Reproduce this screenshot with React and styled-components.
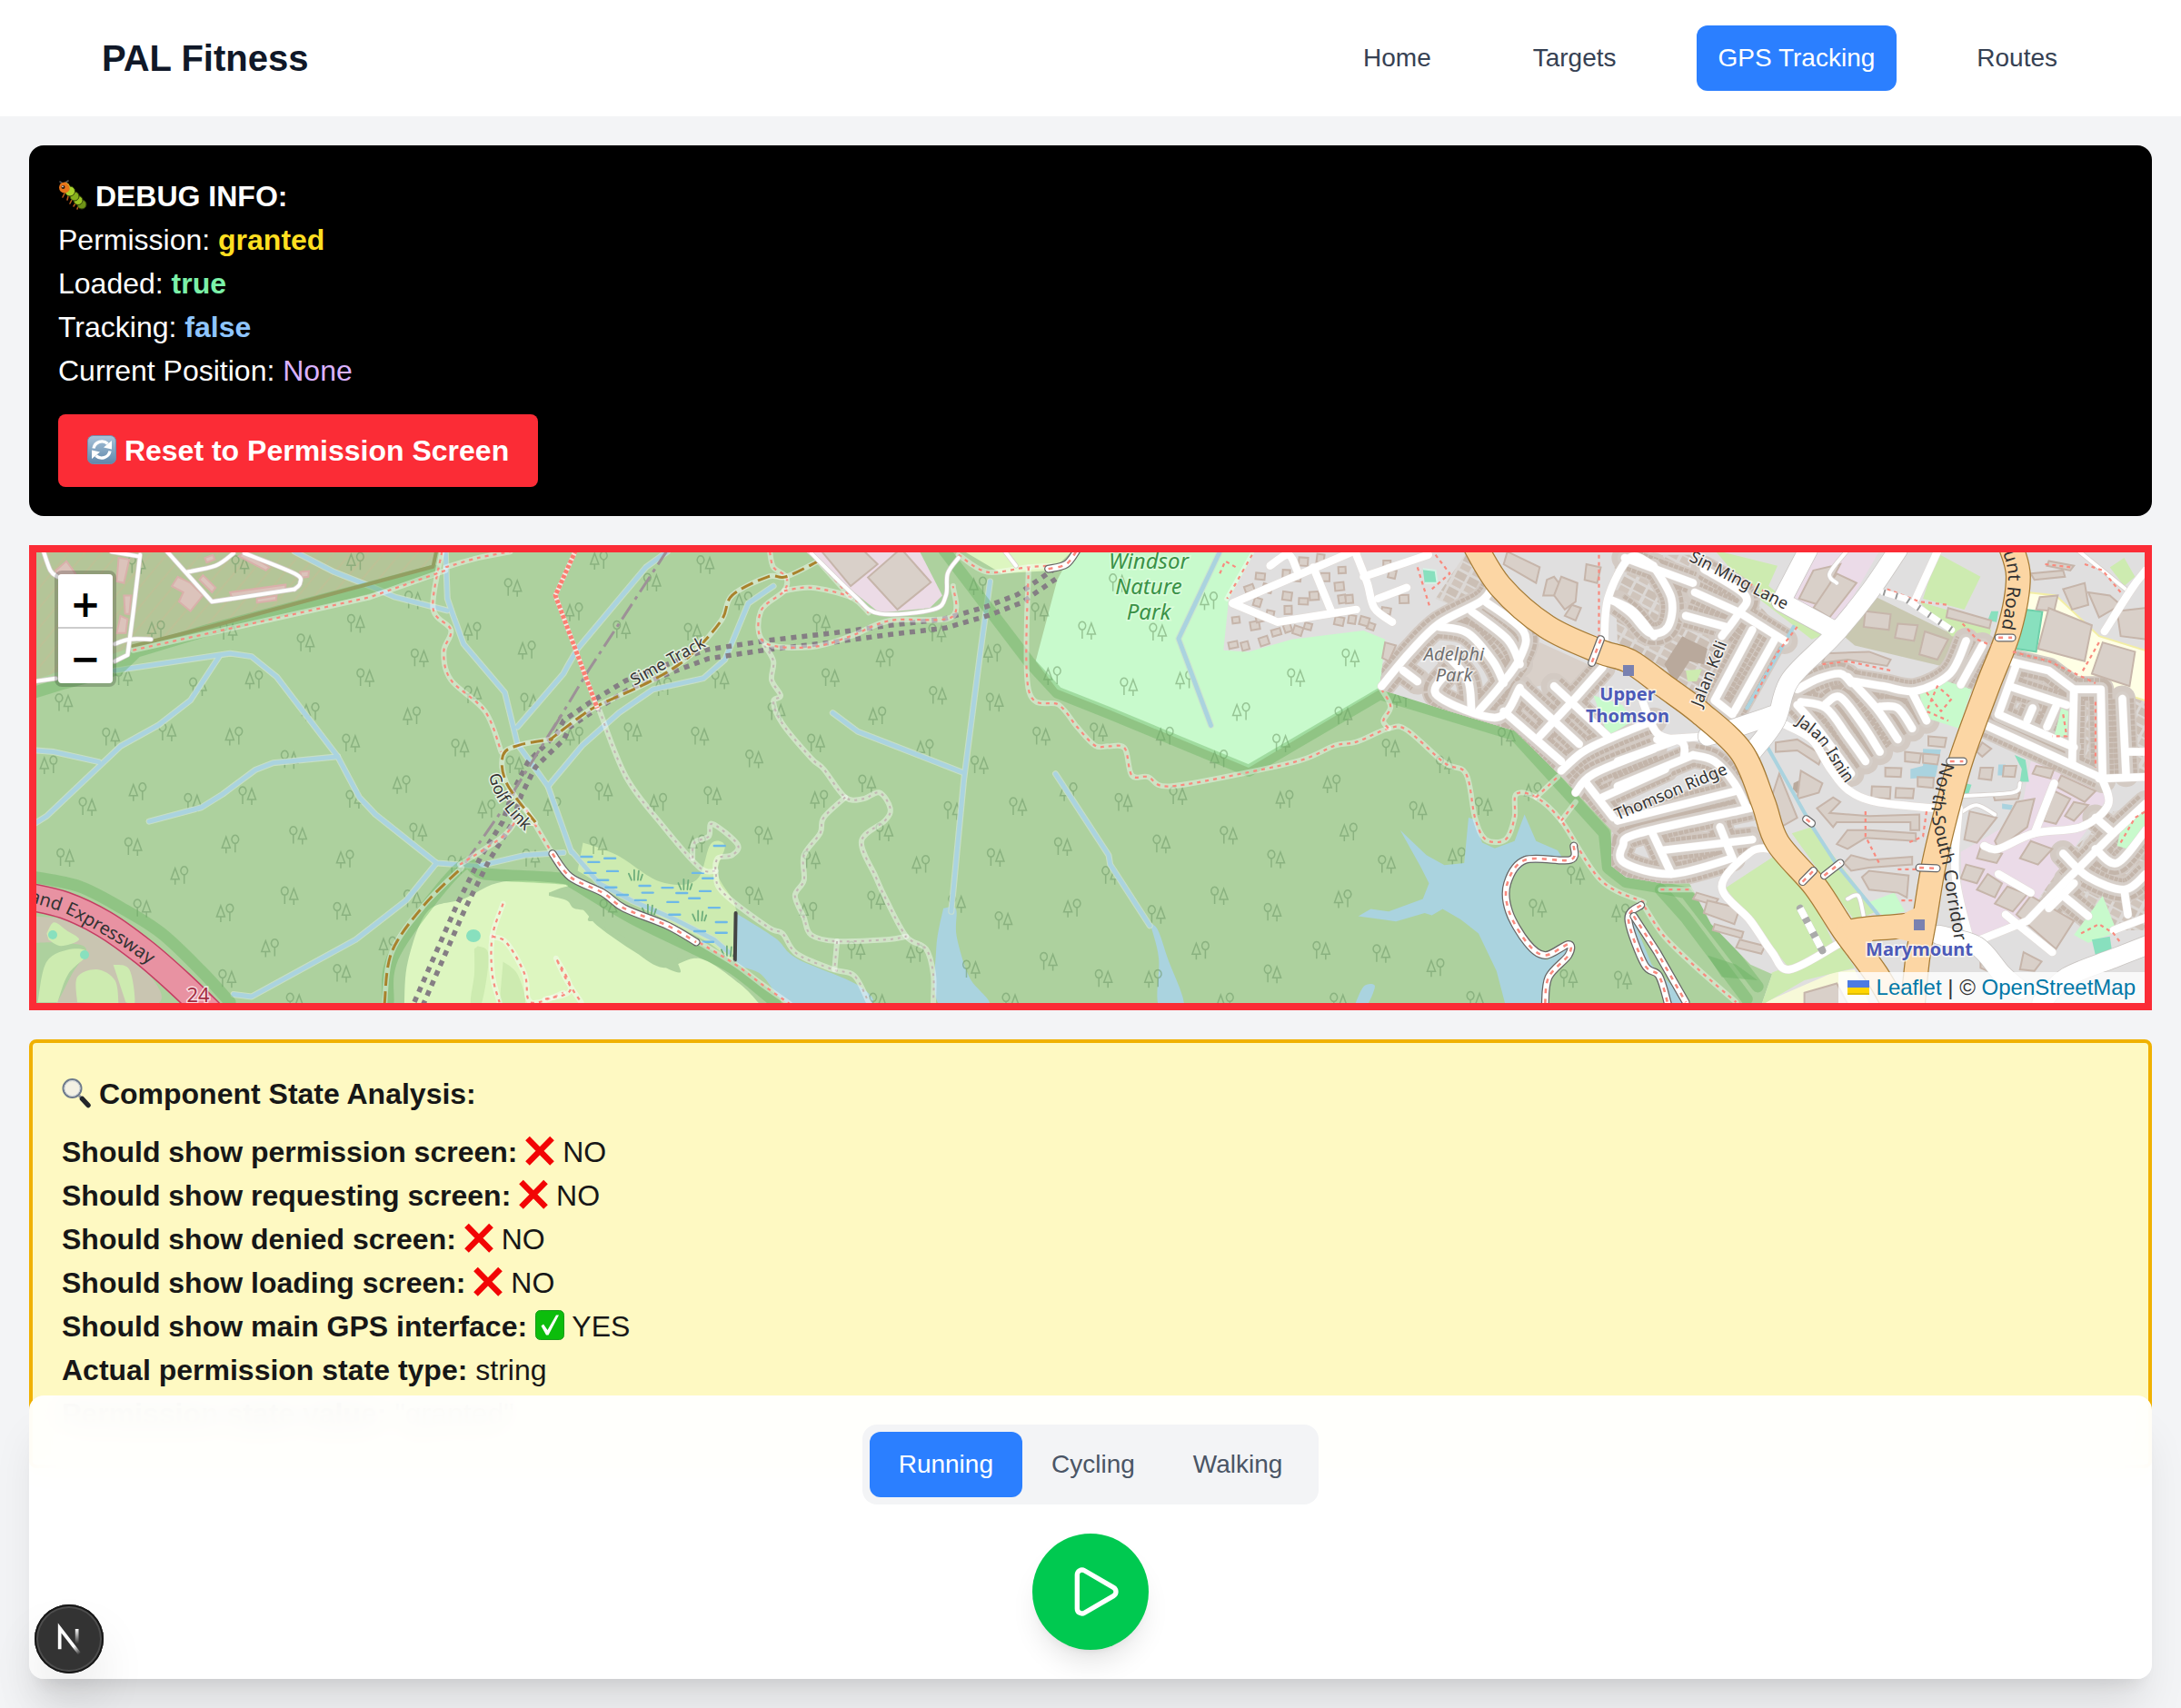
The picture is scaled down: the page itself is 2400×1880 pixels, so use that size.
import React from 'react';
import styled, { createGlobalStyle } from 'styled-components';
import { Play } from 'lucide-react';

const GlobalStyle = createGlobalStyle`
  *, *::before, *::after { box-sizing: border-box; }
  body {
    margin: 0;
    background: #f3f4f6;
    color: #171717;
    font-family: "Liberation Sans", Arial, Helvetica, sans-serif;
    font-size: 32px;
    line-height: 48px;
  }
  button { font: inherit; color: inherit; border: 0; margin: 0; cursor: pointer; }
  a { text-decoration: none; }
  h1, h2, p { margin: 0; font-size: inherit; }
`;

/* ---------- page chrome ---------- */

const Header = styled.header`
  display: flex;
  align-items: center;
  justify-content: space-between;
  height: 128px;
  padding: 0 112px;
  background: #fff;
`;

const Brand = styled.h1`
  font-size: 40px;
  line-height: 56px;
  font-weight: 700;
  color: #101828;
`;

const Nav = styled.nav`
  display: flex;
  gap: 64px;
`;

const NavLink = styled.a`
  padding: 16px 24px;
  border-radius: 12px;
  font-size: 28px;
  line-height: 40px;
  color: ${(p) => (p.$active ? '#fff' : '#364153')};
  background: ${(p) => (p.$active ? '#2b7fff' : 'transparent')};
`;

const Main = styled.main`
  display: flex;
  flex-direction: column;
  gap: 32px;
  padding: 32px;
`;

const DebugPanel = styled.section`
  padding: 32px;
  border-radius: 16px;
  background: #000;
  color: #fff;
`;

const Value = styled.span`
  color: ${(p) => p.$color};
  font-weight: ${(p) => (p.$bold ? 700 : 400)};
`;

const ResetButton = styled.button`
  display: block;
  margin-top: 24px;
  padding: 16px 32px;
  border-radius: 8px;
  background: #fb2c36;
  color: #fff;
  font-weight: 700;
`;

const Emoji = styled.svg`
  width: 32px;
  height: 34px;
  vertical-align: -5px;
`;

const StatePanel = styled.section`
  padding: 32px;
  border: 4px solid #f0b100;
  border-radius: 8px;
  background: #fef9c2;
`;

const StateTitle = styled.h2`
  margin-bottom: 16px;
  font-weight: 700;
`;

/* ---------- map ---------- */

const MapFrame = styled.section`
  position: relative;
  height: 512px;
  border: 8px solid #fb2c36;
  overflow: hidden;
  background: #add19e;
`;

const MapSvg = styled.svg`
  display: block;
  width: 100%;
  height: 100%;
`;

const ZoomControl = styled.div`
  position: absolute;
  top: 20px;
  left: 20px;
  display: flex;
  flex-direction: column;
  border: 4px solid rgba(0, 0, 0, 0.2);
  border-radius: 8px;
  background-clip: padding-box;
`;

const ZoomButton = styled.button`
  width: 60px;
  height: 60px;
  padding: 0;
  background: #fff;
  color: #000;
  font-family: "DejaVu Sans", sans-serif;
  font-weight: 700;
  font-size: 40px;
  line-height: 66px;
  overflow: hidden;
  &:first-child { border-bottom: 2px solid #ccc; border-radius: 4px 4px 0 0; }
  &:last-child { border-radius: 0 0 4px 4px; }
`;

const Attribution = styled.div`
  position: absolute;
  right: 0;
  bottom: 0;
  padding: 0 10px;
  font-size: 24px;
  line-height: 34px;
  color: #333;
  background: rgba(255, 255, 255, 0.8);
  a { color: #0078a8; }
`;

const Flag = styled.svg`
  width: 24px;
  height: 16px;
  margin-right: 8px;
`;

const Shape = styled.path`
  fill: ${(p) => p.$fill};
  stroke: ${(p) => p.$edge || 'none'};
  stroke-width: 2px;
`;

const Stroke = styled.path`
  fill: none;
  stroke: ${(p) => p.$color};
  stroke-width: ${(p) => p.$w}px;
  stroke-dasharray: ${(p) => p.$dash || 'none'};
  stroke-linejoin: round;
  stroke-linecap: ${(p) => (p.$dash ? 'butt' : 'round')};
`;

const MapLabel = styled.text`
  font-family: "Noto Sans", sans-serif;
  font-size: ${(p) => p.$size || 18}px;
  font-weight: ${(p) => (p.$bold ? 700 : 400)};
  font-style: ${(p) => (p.$italic ? 'italic' : 'normal')};
  fill: ${(p) => p.$color || '#333'};
  stroke: ${(p) => p.$halo || 'rgba(255,255,255,0.7)'};
  stroke-width: 3px;
  paint-order: stroke;
`;

/* The map is digitised on four sheets; each covers 620x540 units on a 1568 grid. */
const A = 0;
const B = 600;
const C = 1200;
const D = 1780;

const points = (...parts) => {
  const out = [];
  for (let i = 0; i < parts.length; i += 2) {
    const n = parts[i + 1].trim().split(/\s+/).map(Number);
    for (let k = 0; k < n.length; k += 2) {
      out.push([
        Math.round((parts[i] + n[k] * 0.3954) * 10) / 10,
        Math.round((590 + n[k + 1] * 0.3444) * 10) / 10,
      ]);
    }
  }
  return out;
};

const straight = (...parts) => 'M' + points(...parts).map((p) => p.join(' ')).join('L');

const smooth = (...parts) => {
  const p = points(...parts);
  let d = `M${p[0].join(' ')}`;
  for (let i = 0; i < p.length - 1; i += 1) {
    const a = p[i - 1] || p[i];
    const b = p[i];
    const c = p[i + 1];
    const e = p[i + 2] || c;
    d += `C${b[0] + (c[0] - a[0]) / 6} ${b[1] + (c[1] - a[1]) / 6} ${c[0] - (e[0] - b[0]) / 6} ${c[1] - (e[1] - b[1]) / 6} ${c[0]} ${c[1]}`;
  }
  return d;
};

/* Copy of a sheet line moved sideways, for double dotted railways. */
const shifted = (offset, ...parts) => {
  const p = points(...parts);
  return 'M' + p.map((q, i) => {
    const a = p[i - 1] || q;
    const b = p[i + 1] || q;
    const len = Math.hypot(b[0] - a[0], b[1] - a[1]) || 1;
    return `${q[0] - ((b[1] - a[1]) / len) * offset} ${q[1] + ((b[0] - a[0]) / len) * offset}`;
  }).join('L');
};

const KINDS = {
  stream: [['rgba(206,226,206,0.8)', 7], ['#aad3df', 4.8]],
  foot: [['rgba(255,255,255,0.4)', 6], ['#f98a7e', 2.2, '4 5']],
  path: [['#f98a7e', 2.2, '4 4']],
  trail: [['rgba(255,255,255,0.42)', 6], ['#c3b6b3', 2, '3 5']],
  track: [['rgba(255,255,255,0.42)', 6], ['#a9822c', 3, '14 6']],
  red: [['#f4e9e0', 5], ['#fa7f72', 5, '4 2']],
  board: [['#666', 9], ['#fff', 6.5], ['#f98a7e', 2.6, '5 6']],
  power: [['#9d9197', 3, '20 6 4 6']],
  edge: [['rgba(105,178,98,0.42)', 13]],
  road: [['#e2dcd8', 9.5], ['#fff', 8.5]],
  lane: [['#d5cfcc', 5.5], ['#fff', 4]],
  wide: [['#c9c5c2', 22], ['#fff', 20.5]],
  houses: [['#d3cac3', 29], ['#c3b5aa', 25, '5 1'], ['#d6cfc9', 16]],
  primary: [['#a67b35', 28], ['#fcd6a4', 25.5]],
  motorway: [['#c53d63', 31], ['#e892a2', 28]],
};

function Ways({ kind, list, layered }) {
  if (layered) {
    return KINDS[kind].map(([color, w, dash], i) =>
      list.map((d, k) => <Stroke key={`${i}-${k}`} d={d} $color={color} $w={w} $dash={dash} />),
    );
  }
  return list.map((d, k) => KINDS[kind].map(([color, w, dash], i) => (
    <Stroke key={`${k}-${i}`} d={d} $color={color} $w={w} $dash={dash} />
  )));
}

const TREES = [
  ...points(A, `668 92 990 82 1427 165 1150 205 435 300 635 305 990 280 1315 305 850 342 1167 390 1467 365 343 450
    550 482 708 460 1016 453 177 533 865 562 1315 508 1472 532 1147 575 465 627 308 643 652 640 976 662 1280 678
    136 732 805 715 1432 732 384 818 536 852 688 830 1118 795 986 842 243 865 1355 873 181 1028 370 993
    642 985 829 957 1163 947 961 1033 1270 1050 1477 1030 500 1085 805 1150 395 1190 627 1205 951 1200 1147 1160
    752 1317 951 1398 632 1415 1080 1310 380 92 820 1490`),
  ...points(B, `150 78 445 92 297 148 81 243 212 300 410 308 552 208 768 280 1090 310 946 390 486 460 793 453 328 482
    1092 510 643 562 925 575 243 627 430 640 82 640 753 662 581 713 1057 680 1208 732 162 818 315 852 465 830
    895 793 763 842 1133 878 607 957 1046 1050 943 947 740 1035 423 985 581 1150 920 1165 733 1200 1145 1175
    865 1325 1030 1335 1185 1385 1315 865 1245 375 1250 532 1380 640 1205 160 1376 243 1507 302 1412 447 1440 993
    1253 1028 1467 1190 1275 1230 1400 1360 1457 818 1295 1490 925 1490 20 865 147 990 175 1190`),
  ...points(C, `330 208 187 308 106 482 262 460 723 390 571 453 420 562 703 575 22 627 208 640 530 662 835 678 358 713
    985 732 1157 643 672 793 91 852 243 830 541 842 911 878 1093 865 1232 818 197 985 384 957 719 947 516 1033
    824 1050 1020 1025 55 1085 358 1150 703 1160 183 1210 506 1203 307 1325 642 1325 809 1335 961 1380 506 1400
    36 1415 175 1415 1350 1085 1244 1190 1476 1205 1330 1415 1481 1420 375 1490 690 1490 1070 1485 865 520 75 150`),
];

const STREAMS = [
  straight(A, '320 430 640 375 700 385 770 450 940 705 1000 835 1045 890 1215 1045 1330 1055 1460 1020 1568 1012'),
  straight(A, '610 385 530 525 440 605 335 672 130 895 95 920'),
  straight(A, '95 685 150 690 275 722'),
  straight(A, '940 705 760 725 710 748 620 825 560 868 415 912'),
  straight(A, '1215 1045 1130 1165 990 1290 700 1472 650 1465'),
  straight(A, '820 50 930 115 1040 165 1100 195 1245 238'),
  straight(A, '1240 50 1245 200 1260 250 1290 345 1405 500 1440 665 1525 800 1590 1010'),
  straight(A, '1440 610 1568 440', B, '60 420 90 360 280 100 340 50'),
  straight(A, '1525 800 1620 670', B, '205 565 300 490 440 455 500 395 565 215 635 160'),
  straight(B, '75 1010 150 1110 240 1165 360 1225 470 1290 510 1330'),
  straight(B, '800 565 870 625 1165 757'),
  straight(B, '1238 145 1210 380 1165 780 1130 1200'),
  straight(B, '1420 760 1568 1020', C, '55 1050 165 1245'),
  straight(C, '360 50 245 328 335 605'),
];

const FOOT = [
  smooth(A, '1230 50 1205 230 1255 300 1235 370 1255 460 1350 560 1395 690'),
  smooth(A, '1240 100 1330 70 1420 50'),
  straight(A, '370 365 1030 195 1240 110'),
  smooth(A, '1280 1050 1400 960 1440 900'),
  smooth(A, '1465 875 1535 1010 1568 1060'),
  smooth(A, '1400 1175 1370 1280 1370 1400 1390 1490'),
  smooth(A, '1370 1280 1410 1300 1460 1400 1470 1480 1500 1490 1568 1460'),
  smooth(B, '0 1480 70 1450 30 1350 60 1420 100 1490'),
  smooth(B, '430 1300 530 1370 600 1430 680 1495'),
  smooth(B, '625 50 635 100 670 130 665 175 600 240 610 340 740 355 850 320 960 270 1130 260 1135 160'),
  smooth(B, '665 175 740 165 850 195 900 245'),
  smooth(B, '760 80 850 195'),
  smooth(B, '1150 60 1230 115 1340 100 1410 95'),
  smooth(B, '1345 100 1345 490 1430 540 1480 610 1530 670 1568 672', C, '95 678 115 765 160 770 220 800 440 755 590 715 680 670 740 658 830 615 880 620 985 725 1045 760 1070 900 1100 970 1155 970 1180 900 1185 825 1240 835 1310 910 1420 1100 1540 1170'),
  smooth(C, '810 490 835 545 815 590 830 615'),
  straight(C, '1240 835 1300 770'),
  straight(C, '1310 910 1350 850'),
  smooth(C, '450 60 400 160 380 200'),
  smooth(D, '75 1185 130 1280 220 1380 330 1490'),
  straight(D, '120 1130 220 1130 280 1100'),
  straight(D, '360 1180 520 1100'),
];

const TRAILS = [
  smooth(B, '150 555 225 770 330 930 430 1060 475 1070'),
  smooth(B, '410 1030 415 980 455 960 465 920 535 985 520 1020 480 1030 475 1080 495 1140 620 1250 660 1270 700 1335 800 1385 860 1405 900 1490'),
  smooth(B, '610 350 635 400 630 460 655 510 635 530 660 600 740 710 775 745 835 835 885 840 930 820 960 870 945 910 880 975 920 1090 950 1165 1005 1280 1060 1320 1080 1400 1080 1490'),
  smooth(B, '835 835 775 900 765 950 720 1020 720 1100 695 1150 720 1220 740 1275 810 1295 950 1290 1005 1280'),
  straight(B, '812 1295 805 1385'),
];

const ROADS_C = [
  straight(C, '750 40 395 215 520 275 740 235'),
  straight(C, '620 100 670 240'),
  smooth(C, '500 95 550 60 575 110'),
  smooth(C, '740 60 770 150 790 230 840 275'),
  straight(C, '760 130 940 60'),
  straight(C, '800 200 880 165'),
];

const ROADS_ADELPHI = [
  smooth(C, '810 480 890 370 970 280 1085 210 1115 170'),
  smooth(C, '970 290 1050 310 1120 400 1150 470'),
  smooth(C, '1060 240 1160 330 1195 410'),
  smooth(C, '1100 210 1205 305 1195 390 1140 480 1080 560'),
  smooth(C, '1000 390 1050 460 1060 550'),
  smooth(C, '990 440 965 510 1130 580 1195 485'),
  straight(C, '870 430 910 465'),
  straight(C, '1195 490 1360 665'),
  straight(C, '1150 560 1310 720'),
  straight(C, '1290 480 1440 640'),
  straight(C, '1425 420 1340 530 1250 640'),
  smooth(C, '1310 750 1370 690 1450 645 1568 590'),
  smooth(C, '1350 820 1400 760 1568 680'),
  straight(C, '1380 790 1455 900'),
  straight(C, '1425 835 1600 745'),
];

const ROADS_TERRACED = [
  straight(D, '20 70 210 150'),
  straight(D, '215 180 340 245 465 335'),
  smooth(D, '240 105 355 190 335 250 290 320'),
  straight(D, '190 255 300 290'),
  smooth(D, '100 95 150 200 140 290 90 310 40 250 0 215'),
  straight(D, '375 300 270 525 320 570'),
  straight(D, '440 325 325 560'),
  smooth(D, '500 490 560 455 620 440 650 470'),
  smooth(D, '660 465 740 480 830 495 925 440 970 335'),
  straight(D, '1015 350 955 475'),
  straight(D, '820 500 860 590'),
  smooth(D, '580 535 620 515 680 600 730 690'),
  smooth(D, '640 450 720 550 780 650'),
  smooth(D, '730 545 780 550 820 615'),
  smooth(D, '510 530 580 550 640 640 690 720'),
  smooth(D, '500 540 560 620 650 760'),
  straight(D, '1090 400 1200 430 1270 490 1345 490 1350 780'),
  straight(D, '1110 410 1060 570 1270 675'),
  straight(D, '1015 600 1340 770'),
  straight(D, '1270 490 1265 725'),
  straight(D, '1405 520 1415 760'),
  straight(D, '1090 480 1250 540'),
  straight(D, '1140 590 1155 550'),
  straight(D, '1195 610 1220 545'),
  straight(D, '1470 855 1380 950 1250 1100'),
  straight(D, '1330 900 1380 950'),
  smooth(D, '1240 1015 1310 1090 1410 1130 1470 1080'),
  smooth(D, '1330 1000 1390 1045 1470 940'),
  straight(D, '1230 1140 1310 1215'),
  straight(D, '1270 1110 1200 1190'),
  straight(D, '0 800 210 700'),
  smooth(D, '210 700 270 720 325 790 360 870'),
  straight(D, '0 910 330 815'),
  smooth(D, '370 870 60 950 15 990 20 1045 150 1080 320 1030'),
  straight(D, '95 945 150 1080'),
  straight(D, '285 930 320 1030'),
  straight(D, '120 1005 375 970'),
];

const ROADS_OPEN = [
  straight(D, '890 50 830 200'),
  smooth(D, '460 600 540 650 590 740 640 810 720 850 880 870'),
  straight(D, '1340 775 1470 770'),
  straight(D, '1470 690 1415 690'),
  smooth(D, '1350 780 1365 860 1290 930 1160 950 1060 1000 1020 990'),
  straight(D, '1215 790 1160 950'),
  straight(D, '1250 1100 1140 1230 1010 1290'),
  straight(D, '1060 1080 1150 1140'),
  straight(D, '1080 1210 1210 1330'),
  straight(D, '1410 1130 1420 1210'),
  smooth(D, '1470 110 1430 170 1355 305'),
  smooth(D, '70 530 110 630 180 660 185 710'),
  straight(D, '0 720 160 655'),
  smooth(D, '430 1000 370 1010 290 1120 370 1230 430 1330 480 1385 620 1300'),
  smooth(D, '950 870 940 1080 980 1290'),
  smooth(C, '1430 350 1440 200 1500 70 1560 90'),
  smooth(C, '1450 205 1510 240 1568 320'),
  straight(D, '1380 1260 1470 1220'),
];

const WIDE = [
  straight(D, '530 45 455 210 600 300'),
  smooth(D, '780 45 700 180 600 320 480 460 440 590 375 690'),
  smooth(D, '440 570 310 620 250 640'),
  smooth(D, '895 1275 1000 1310 1070 1400 1120 1450'),
  smooth(D, '1480 1305 1380 1350 1250 1410 1180 1490'),
];

const URBAN = straight(C, '460 45 385 200 370 365 440 370 560 330 760 302 820 330 805 490 1000 560 1180 622 1320 780 1450 940 1450 1055 1490 1090 1590 1110', D, '200 1110 260 1240 370 1370 430 1400 400 1500 1480 1500 1480 45');

const BLOCKS = [
  straight(D, '545 110 620 90 560 220 505 200'),
  straight(D, '610 120 665 150 590 260 545 230'),
  straight(D, '1175 195 1225 190 1215 240 1165 235'),
  straight(D, '1200 230 1320 285 1300 400 1170 360'),
  straight(D, '1350 340 1440 370 1425 480 1320 440'),
  straight(D, '1390 240 1470 230 1470 330 1400 320'),
  straight(D, '1150 120 1240 110 1245 130 1160 140'),
  straight(D, '1200 80 1270 95 1260 110 1195 95'),
  straight(D, '1240 170 1300 150 1310 220 1265 235'),
  straight(D, '1310 180 1370 190 1400 220 1340 260'),
  straight(D, '920 230 1040 270 1035 295 915 260'),
  straight(D, '690 240 760 250 755 300 685 290'),
  straight(D, '780 280 835 285 825 335 772 325'),
  straight(D, '855 305 920 330 890 395 840 378'),
  straight(D, '580 375 700 370 760 395 750 415 640 395 570 405'),
  straight(D, '865 640 915 645 910 675 865 670'),
  straight(D, '800 690 845 695 840 725 800 720'),
  straight(D, '850 695 895 700 890 730 850 725'),
  straight(D, '745 740 790 742 788 770 745 768'),
  straight(D, '835 770 880 772 878 805 835 800'),
  straight(D, '708 800 760 802 758 840 706 836'),
  straight(D, '775 805 825 808 822 838 773 836'),
  straight(D, '1010 740 1045 740 1040 780 1005 775'),
  straight(D, '1075 735 1110 735 1105 770 1072 768'),
  straight(D, '1015 660 1040 680 1015 705 1000 690'),
  straight(D, '1045 825 1120 820 1115 840 1050 845'),
  straight(D, '980 880 1055 900 1000 980 965 970'),
  straight(D, '1110 850 1160 840 1140 930 1060 1000 1050 975'),
  straight(D, '1165 735 1215 745 1205 775 1155 760'),
  straight(D, '1235 765 1330 815 1300 850 1220 800'),
  straight(D, '1215 815 1260 840 1220 920 1185 910'),
  straight(D, '1270 850 1310 860 1270 910 1245 895'),
  straight(D, '1010 995 1070 1015 1055 1045 1000 1030'),
  straight(D, '1150 975 1210 1000 1170 1050 1120 1030'),
  straight(D, '970 1050 1020 1065 1000 1110 955 1095'),
  straight(D, '1030 1080 1070 1110 1050 1155 1000 1130'),
  straight(D, '1085 1120 1140 1145 1100 1200 1050 1175'),
  straight(D, '1150 1150 1270 1230 1220 1320 1110 1210'),
  straight(D, '1010 1330 1060 1370 1050 1400 1010 1380'),
  straight(D, '1130 1330 1180 1360 1160 1390 1120 1385'),
  straight(D, '450 760 500 900 455 930 430 830'),
  straight(D, '510 750 570 790 560 820 500 840'),
  straight(D, '440 660 500 650 570 700 560 730 500 685 440 690'),
  straight(D, '555 870 600 835 620 850 590 885 700 895 840 890 840 940 815 940 815 915 700 915 610 915 600 930'),
  straight(D, '610 985 640 940 700 940 830 950 830 975 690 965 640 1000'),
  straight(D, '630 1045 650 1020 700 1035 820 1025 820 1050 700 1060 650 1070'),
  straight(D, '680 1090 700 1070 810 1085 805 1155 780 1140 700 1130'),
  straight(D, '220 1140 280 1160 270 1180 210 1160'),
  straight(D, '250 1165 340 1190 325 1240 240 1205'),
  straight(D, '270 1240 350 1265 345 1285 265 1260'),
  straight(D, '340 1290 410 1310 400 1335 330 1315'),
  straight(D, '520 1460 610 1430 640 1495 520 1495'),
  straight(C, '1160 50 1250 100 1240 150 1150 90'),
  straight(C, '1270 140 1290 130 1310 160 1300 190 1260 190'),
  straight(C, '1310 130 1355 150 1350 210 1320 235 1290 190'),
  straight(C, '1340 220 1365 230 1350 270 1320 255'),
  straight(C, '1380 90 1420 100 1410 150 1375 140'),
  straight(C, '820 340 850 350 830 400 812 390'),
  straight(B, '770 50 880 40 925 90 850 160'),
  straight(B, '990 40 1073 148 980 235 898 132'),
];

const BARRACKS = [
  straight(A, '155 110 185 80 210 120 190 150 160 130'),
  straight(A, '330 70 360 75 345 150 325 145'),
  straight(A, '495 130 530 150 565 190 530 240 498 210 510 180 478 160'),
  straight(A, '640 180 795 155 795 175 645 195'),
  straight(A, '680 50 750 100 740 110 665 65'),
  straight(A, '565 125 600 165 590 180 555 140'),
  straight(A, '345 190 365 190 360 250 348 248'),
  straight(A, '335 255 355 265 350 310 325 310'),
  straight(A, '715 200 770 190 768 205 715 213'),
  straight(A, '570 70 592 60 598 75 575 85'),
  straight(A, '835 115 860 112 858 130 840 133'),
];

const BUNGALOWS = points(C, `440 170 465 210 490 165 500 250 545 190 575 130 590 210 550 235 620 190 405 270 455 285 470 260
  515 310 548 292 575 300 605 290 690 270 728 265 470 130 545 120 650 130 700 110 690 160 700 200 395 350 430 350 480 335
  780 290 760 270 840 120 820 240 640 70 590 80 825 90 870 200 720 200`);

const WET = [
  [100, 1025], [165, 1030], [120, 1042], [110, 1077], [172, 1071], [145, 1100], [200, 1147], [270, 1140], [325, 1124],
  [365, 1141], [430, 1135], [400, 1158], [340, 1170], [455, 1188], [345, 1210], [475, 1234], [415, 1263], [475, 1268],
  [438, 1297], [438, 1094], [470, 990], [250, 1164], [410, 1077], [262, 1118], [168, 1123],
];

const REEDS = points(B, '250 1085 388 1115 428 1215 288 1195 508 1328');

const SUBWAY = [A, '1165 1495 1220 1350 1285 1180 1350 1030 1410 920 1440 820 1480 730 1560 640', B, '60 600 130 545 230 475 330 430 450 378 620 348 800 325 960 300 1110 280 1230 240 1320 200 1420 120'];

function Trees() {
  return (
    <g fill="none" stroke="#6f9a68" strokeWidth="1.500" opacity="0.55">
      {TREES.map(([x, y], i) => {
        const s = i % 3 === 1 ? -1 : 1;
        return (
          <path
            key={i}
            d={`M${x - 5 * s} ${y + 9}v-10m-1 0a3.800 4.500 0 1 1 2 0zM${x + 5 * s} ${y + 10}v-6m-4.500 0l4.500 -12l4.500 12z`}
          />
        );
      })}
    </g>
  );
}

function CityMap() {
  return (
    <MapSvg viewBox="40 608 2320 496" preserveAspectRatio="xMidYMid slice" role="img" aria-label="Street map">
      <defs>
        <pattern id="hatch" width="14" height="14" patternUnits="userSpaceOnUse" patternTransform="rotate(40)">
          <rect width="14" height="14" fill="#b4c598" />
          <rect width="2" height="14" fill="#bcc196" />
        </pattern>
        <pattern id="homes" width="15" height="20" patternUnits="userSpaceOnUse" patternTransform="rotate(28)">
          <rect width="15" height="20" fill="#dcd8d5" />
          <rect x="1" y="1" width="12" height="8" fill="#cbbfb5" />
          <rect x="2" y="11" width="11" height="7" fill="#d0c5bc" />
        </pattern>
        <clipPath id="urban-clip"><path d={URBAN} /></clipPath>
        <path id="way-express" d={smooth(A, '80 1168 180 1205 260 1255 340 1310 440 1390')} />
        <path id="way-golf" d={smooth(A, '1360 765 1385 840 1440 920 1500 980')} />
        <path id="way-isnin" d={smooth(D, '495 600 560 660 610 750 640 800')} />
        <path id="way-road" d={smooth(D, '1062 20 1086 110 1082 200 1064 330')} />
        <path id="way-corridor" d={smooth(D, '903 722 886 800 874 880 888 970 908 1070 917 1150 944 1340')} />
      </defs>

      <rect x="40" y="608" width="2320" height="496" fill="#add19e" />

      <Shape $fill="url(#hatch)" d={straight(A, '95 45 1210 45 1205 95 600 295 370 355 95 460')} />
      <Shape $fill="#c8facc" d={straight(B, '1470 45 1425 140 1365 400 1425 490 1568 555', C, '440 740 805 490 825 325 900 200 460 45')} />
      <Shape $fill="#ddf6c0" d={smooth(A, '1125 1500 1135 1360 1190 1200 1290 1160 1400 1105 1568 1112', B, '60 1140 110 1200 150 1250 250 1330 330 1380 430 1350 540 1430 600 1500')} />
      <Shape $fill="#add19e" d={smooth(B, '10 1140 80 1120 190 1170 330 1240 430 1340 370 1350 375 1395 320 1370 300 1340 230 1310 220 1280 170 1260 165 1230 120 1230 125 1200 80 1190 60 1165 10 1150')} />
      <Shape $fill="#cdebb0" d={smooth(A, '1330 1310 1360 1340 1340 1495 1310 1495 1320 1400 1320 1320')} />
      <Shape $fill="#cdebb0" d={smooth(A, '1400 1360 1440 1400 1460 1495 1390 1495')} />
      <Shape $fill="#ecdbe6" d={straight(B, '720 45 1040 45 1105 190 1070 230 930 245 860 180')} />
      <Shape $fill="#cdebb0" d={smooth(B, '105 980 200 1020 320 1105 420 1100 460 985 500 990 480 1080 530 1190 530 1350 440 1290 240 1170 90 1070')} />
      <Shape $fill="#ddf6c0" d={straight(B, '1160 45 1470 45 1410 110 1270 120')} />

      <Shape $fill="#aad3df" d={smooth(B, '530 1205 640 1285 700 1350 870 1435 900 1500 690 1500 600 1400 530 1355 530 1205')} />
      <Shape $fill="#aad3df" d={smooth(B, '1108 1190 1143 1192 1145 1280 1180 1410 1235 1500 1098 1500 1088 1320 1108 1190')} />
      <Shape $fill="#aad3df" d={smooth(C, '165 1235 188 1260 215 1350 260 1500 190 1500 190 1350 165 1235')} />
      <Trees />
      <Shape $fill="#aad3df" d={straight(C, '862 940 935 1020 985 1052 1040 1045 1052 900 1068 905 1090 980 1125 998 1180 975 1208 890 1240 975 1300 1005 1320 1040 1210 1045 1160 1110 1165 1200 1210 1300 1270 1355 1340 1310 1280 1410 1275 1500 1155 1500 1130 1390 1080 1270 1030 1225 980 1192 950 1212 930 1205 850 1232 745 1215 780 1192 830 1200 925 1160 942 1110 920 1060')} />
      <Shape $fill="#aad3df" d={smooth(C, '735 1500 760 1440 790 1435 785 1465 770 1500')} />
      <Shape $fill="#aad3df" d={straight(D, '45 1230 95 1370 145 1430 200 1500 140 1500 110 1400 70 1360 35 1245')} />

      <Shape $fill="#c9c5b1" d={smooth(A, '95 1215 200 1230 300 1290 400 1380 430 1500 95 1500')} />
      <Shape $fill="#add19e" d={smooth(A, '95 1300 180 1300 240 1320 200 1400 150 1500 95 1500')} />
      <Shape $fill="#cdebb0" d={smooth(A, '105 1490 130 1360 200 1320 245 1335 190 1400 160 1490')} />
      <Shape $fill="#cdebb0" d={smooth(A, '215 1490 215 1410 270 1385 320 1420 330 1495')} />
      <Shape $fill="#cdebb0" d={smooth(A, '315 1370 360 1385 375 1490 350 1490')} />
      <Shape $fill="#cdebb0" d={smooth(A, '130 1270 150 1235 185 1260 220 1290 170 1310 135 1290')} />
      <circle cx="58" cy="1029" r="5" fill="#88e0be" />
      <circle cx="93" cy="1051" r="5" fill="#88e0be" />
      <ellipse cx="521" cy="1030" rx="8" ry="7" fill="#88e0be" />

      <Ways kind="stream" list={STREAMS} layered />
      <Ways
        kind="edge"
        list={[
          straight(A, '95 500 180 470 330 425 380 370 580 300 1210 110'),
          smooth(A, '95 1090 220 1120 340 1190 450 1270 560 1390 640 1490'),
          smooth(A, '1080 1490 1100 1330 1280 1060 1350 1080 1568 1095', B, '80 1110 240 1220 400 1310 520 1380 640 1490'),
          straight(B, '1110 45 1345 400 1425 500 1568 565', C, '440 750 805 505 1180 635 1430 950 1440 1060 1490 1105 1568 1120', D, '190 1140 250 1230 390 1440'),
          straight(D, '120 1130 190 1220 360 1480'),
        ]}
      />
      <Stroke d={straight(A, '370 352 590 288 1205 98 1215 45')} $color="#929f62" $w={4} />
      <Shape $fill="rgba(105,178,98,0.45)" d={straight(D, '250 1340 330 1370 390 1420 290 1410')} />

      {/* wetland dashes, reeds and the dam */}
      {WET.map(([x, y]) => (
        <Stroke key={`${x}-${y}`} d={straight(B, `${x} ${y} ${x + 30} ${y}`)} $color="#6db8e8" $w={2.4} />
      ))}
      {REEDS.map(([x, y]) => (
        <Stroke key={x} d={`M${x - 4} ${y + 5}l-3 -7M${x - 1} ${y + 5}v-11M${x + 3} ${y + 5}l1 -10M${x + 6} ${y + 5}l2 -6`} $color="#6fae7c" $w={1.8} />
      ))}
      <Stroke d={straight(B, '530 1205 528 1355')} $color="#444" $w={4} />

      <Stroke d={shifted(5, ...SUBWAY)} $color="#857e84" $w={5.5} $dash="6 6" />
      <Stroke d={shifted(-5, ...SUBWAY)} $color="#857e84" $w={5.5} $dash="6 6" />
      <Ways kind="power" list={[straight(A, '1295 1045 1395 880'), straight(A, '1425 825 1568 560'), straight(B, '20 620 120 430 340 45')]} />
      <Ways kind="trail" list={TRAILS} />
      <Ways kind="foot" list={FOOT} />
      <Ways
        kind="track"
        list={[
          smooth(A, '1070 1495 1090 1330 1180 1180 1285 1060'),
          smooth(A, '1490 915 1410 790 1400 700 1445 668 1530 650', B, '20 645 100 575 150 540 300 460 400 385 490 270 520 190 620 130 670 130 760 80'),
        ]}
      />
      <Ways kind="red" list={[straight(B, '85 45 28 190 85 365 145 550')]} />
      <Ways
        kind="board"
        list={[
          smooth(B, '20 1015 70 1090 160 1140 220 1190 340 1245 420 1298'),
          smooth(B, '1400 105 1450 90 1480 45'),
          smooth(C, '1345 990 1335 1035 1210 1035 1160 1110 1165 1200 1215 1300 1265 1340 1330 1305 1330 1340 1275 1410 1265 1500'),
          smooth(D, '65 1180 30 1225 75 1370 115 1405 140 1495'),
          straight(D, '45 1215 110 1330 190 1490'),
        ]}
      />

      {/* built-up side */}
      <Shape $fill="#e0dfdf" d={URBAN} />
      <g clipPath="url(#urban-clip)">
        <Shape $fill="url(#homes)" d={straight(C, '960 200 1050 45 1075 60 1130 170 1040 240')} />
        <Shape $fill="url(#homes)" d={straight(D, '-10 60 200 60 370 190 480 330 300 590 180 500 0 340')} />
        <Shape $fill="url(#homes)" d={straight(D, '1090 380 1480 520 1480 770 1340 770 1020 590')} />
        <Shape $fill="url(#homes)" d={straight(D, '1250 1020 1380 880 1480 860 1480 1260 1380 1260 1160 1140')} />
        <Shape $fill="#ebdbe8" d={straight(D, '555 45 730 45 610 285 485 205')} />
        <Shape $fill="#ebdbe8" d={straight(D, '1150 720 1380 800 1330 900 1140 1210 1000 1310 960 1250 955 1010 1120 900')} />
        <Shape $fill="#c9c8b1" d={straight(D, '720 195 960 330 900 415 660 350 620 310')} />
        <Shape $fill="#ffffe5" $edge="#f3eea5" d={straight(D, '1140 180 1220 190 1340 320 1480 370 1480 530 1340 480 1110 370')} />
        <Shape $fill="#f7f9d8" d={straight(D, '400 1495 600 1395 660 1385 700 1495')} />
        <Shape $fill="#cdebb0" d={straight(D, '270 45 445 95 420 160 590 310 540 330 370 180')} />
        <Shape $fill="#cdebb0" d={straight(D, '890 55 1010 130 965 235 850 200')} />
        <Shape $fill="#cdebb0" d={straight(D, '840 210 930 240 1040 300 1030 345 930 320')} />
        <Shape $fill="#cdebb0" d={straight(D, '300 1125 440 1020 560 1200 600 1300 480 1385 380 1240')} />
        <Shape $fill="#cdebb0" d={straight(D, '485 950 540 930 720 1200 660 1230')} />
        <Shape $fill="#cdebb0" d={straight(D, '430 1395 620 1310 660 1380 520 1420 400 1500 400 1440')} />
        <Shape $fill="#cdebb0" d={straight(D, '1370 100 1410 70 1440 130 1410 160')} />
        <Shape $fill="#d9d0c9" d={straight(C, '1250 340 1385 410 1350 520 1280 470 1210 490 1215 410')} />
        <Ways kind="houses" list={[...ROADS_ADELPHI, ...ROADS_TERRACED]} layered />
      </g>
      <Shape $fill="#cdebb0" d={straight(D, '190 430 235 425 220 465 195 465')} />
      <Shape $fill="#c8facc" d={straight(D, '840 500 910 462 985 490 950 615 855 580')} />
      <Shape $fill="#c8facc" d={straight(D, '1270 1275 1350 1150 1390 1265 1310 1300')} />
      <Shape $fill="#c8facc" d={straight(D, '1470 870 1400 940 1390 990 1420 1000 1470 950')} />
      <Shape $fill="#c8facc" d={straight(D, '1235 550 1255 560 1250 640 1215 640')} />
      <Shape $fill="#c8facc" d={straight(D, '700 1170 770 1140 800 1200 740 1215')} />
      <Shape $fill="#c8facc" d={straight(C, '1400 510 1480 540 1510 590 1440 640')} />
      <Shape $fill="#88e0be" $edge="#6fcfaa" d={straight(D, '1135 235 1182 242 1165 370 1110 360')} />
      <Shape $fill="#88e0be" d={straight(D, '1105 700 1135 715 1145 785 1120 785 1125 745')} />
      <Shape $fill="#88e0be" d={straight(D, '1320 1290 1370 1280 1375 1320 1330 1340')} />
      <Shape $fill="#88e0be" d={straight(D, '965 790 985 795 975 830 962 825')} />
      <Shape $fill="#88e0be" d={straight(D, '1040 240 1060 240 1055 275 1030 270')} />
      <Shape $fill="#88e0be" $edge="#d5f3e6" d={straight(C, '925 105 960 110 965 150 930 150')} />
      <Shape $fill="#aad3df" d={straight(D, '850 680 900 682 885 770 815 775 815 745 850 735')} />
      <Shape $fill="#aad3df" d={straight(D, '1060 730 1080 730 1075 765 1058 765')} />
      <Shape $fill="#aad3df" d={straight(D, '1070 855 1100 860 1095 875 1070 872')} />
      <Shape $fill="#b9a99c" d={straight(D, '180 320 250 360 240 410 200 400 160 470 130 410')} />
      <Shape $fill="#b9a99c" d={straight(D, '490 790 510 778 522 795 518 815 498 822 488 808')} />

      {BUNGALOWS.map(([x, y], i) => (
        <rect
          key={i}
          x={x - 4}
          y={y - 4}
          width={i % 2 ? 8 : 10}
          height={i % 3 ? 9 : 7}
          fill="#d9d0c9"
          stroke="#c6b5aa"
          strokeWidth="2"
          transform={`rotate(${(i * 37) % 40 - 20} ${x} ${y})`}
        />
      ))}
      {BLOCKS.map((d, i) => (
        <Shape key={i} d={`${d}Z`} $fill="#d9d0c9" $edge="#c6b5aa" />
      ))}
      {BARRACKS.map((d, i) => (
        <Shape key={i} d={`${d}Z`} $fill="#dcc3bb" $edge="#d9b0aa" />
      ))}
      <Stroke d={straight(D, '415 670 540 925 610 1050 725 1210')} $color="#aad3df" $w={4} />
      <Stroke d={straight(D, '490 290 360 550')} $color="#aad3df" $w={4} />
      <Ways
        kind="lane"
        layered
        list={[
          straight(D, '1280 45 1425 180'),
          smooth(D, '960 830 1100 820 1120 790'),
          smooth(D, '960 880 1000 860 1050 890'),
          smooth(D, '640 1160 670 1150 685 1215'),
          smooth(D, '640 45 590 120 610 150'),
          smooth(A, '120 45 140 110 160 130'),
          straight(A, '390 60 370 250 355 380 320 400'),
          straight(A, '310 50 385 65'),
          smooth(A, '320 345 360 330 420 330'),
          straight(A, '465 50 590 210 820 170'),
          smooth(A, '680 55 820 120 835 150 820 170'),
          smooth(A, '520 115 600 95 650 55'),
          smooth(B, '740 55 860 190 930 248 1080 235 1115 190 1120 120 1150 70'),
          straight(B, '1280 50 1310 95'),
          straight(A, '95 465 155 455'),
        ]}
      />
      <Ways kind="road" list={[...ROADS_C, ...ROADS_ADELPHI, ...ROADS_TERRACED, ...ROADS_OPEN, straight(D, '250 640 110 650')]} layered />
      <Ways kind="wide" list={WIDE} layered />
      <Ways
        kind="primary"
        layered
        list={[
          smooth(C, '1065 20 1140 160 1270 290 1420 370 1500 400', D, '130 480 230 565 345 690 405 850 445 980 550 1120 630 1260 720 1400 780 1520'),
          smooth(D, '1090 20 1115 130 1090 300 1030 480 960 700 920 860 880 1050 855 1220 835 1350 820 1520'),
          smooth(D, '640 1265 700 1255 760 1250 850 1240'),
        ]}
      />
      <Shape $fill="#fcd6a4" d={smooth(D, '620 1215 680 1238 770 1222 830 1190 870 1210 860 1300 790 1290 730 1275 690 1310 640 1290 620 1215')} />
      <Ways
        kind="path"
        list={[
          straight(D, '570 410 640 400 760 430'), straight(D, '690 880 690 960 730 1050'), straight(D, '860 880 850 960 810 980'),
          straight(D, '1100 370 1200 400 1330 470'), straight(D, '1340 340 1290 440'), straight(D, '750 170 840 210 920 220'),
          straight(D, '860 500 900 560 930 520 890 480 860 560 920 590'), straight(D, '1190 90 1260 100'), straight(D, '1300 90 1350 110 1400 180'),
          straight(D, '500 290 440 380 380 520'), straight(D, '1240 570 1250 640 1210 640'), straight(D, '1290 1270 1340 1240 1380 1270 1400 1300'),
          straight(C, '910 100 945 230'), straight(C, '960 60 1000 120 950 170'), straight(D, '1330 530 1330 740'),
          straight(D, '1400 980 1440 900 1470 880'), straight(D, '790 1165 820 1165'), straight(D, '780 1065 830 1065'),
          straight(C, '1415 60 1415 320'), straight(D, '960 280 1000 330 1040 350'), straight(D, '330 130 430 190'), straight(C, '360 120 375 80 405 100'),
        ]}
      />
      <Ways
        kind="board"
        list={[straight(D, '515 1105 545 1070'), straight(D, '575 1085 620 1045'), straight(D, '1060 325 1098 325'), straight(D, '925 720 962 720'), straight(D, '840 1060 888 1062'), straight(C, '1420 330 1395 405'), straight(D, '525 905 540 918')]}
      />
      <Stroke d={straight(D, '740 180 800 200 930 300')} $color="#fff" $w={7} />
      <Stroke d={straight(D, '740 180 800 200 930 300')} $color="#999" $w={7} $dash="2 12" />
      <Stroke d={straight(D, '508 1190 570 1325')} $color="#aaa" $w={8} />
      <Stroke d={straight(D, '508 1190 570 1325')} $color="#fff" $w={8} $dash="12 6" />

      <Ways kind="motorway" list={[smooth(A, '70 1150 180 1180 290 1240 400 1330 500 1430 590 1530')]} />
      <rect x="1786" y="732" width="12" height="12" fill="#7981b0" />
      <rect x="2106" y="1012" width="12" height="12" fill="#7981b0" />

      <g textAnchor="middle">
        <MapLabel $size={24} $italic $color="#3a9247" $halo="rgba(225,255,225,0.8)">
          <tspan x="1264" y="626">Windsor</tspan>
          <tspan x="1264" y="654">Nature</tspan>
          <tspan x="1264" y="682">Park</tspan>
        </MapLabel>
        <MapLabel $size={20} $italic $color="#6f6f6f">
          <tspan x="1600" y="727">Adelphi</tspan>
          <tspan x="1600" y="750">Park</tspan>
        </MapLabel>
        <MapLabel $size={20} $bold $color="#4c5ab8">
          <tspan x="1791" y="771">Upper</tspan>
          <tspan x="1791" y="795">Thomson</tspan>
        </MapLabel>
        <MapLabel $size={20} $bold $color="#4c5ab8" x="2112" y="1052">Marymount</MapLabel>
        <MapLabel $size={22} $color="#a32e42" x="218" y="1103">24</MapLabel>
      </g>
      <MapLabel transform="translate(698 755) rotate(-29)">Sime Track</MapLabel>
      <MapLabel transform="translate(1858 617) rotate(27)">Sin Ming Lane</MapLabel>
      <MapLabel transform="translate(1872 779) rotate(-68)">Jalan Keli</MapLabel>
      <MapLabel transform="translate(1780 903) rotate(-23)">Thomson Ridge</MapLabel>
      <MapLabel><textPath href="#way-golf">Golf Link</textPath></MapLabel>
      <MapLabel><textPath href="#way-isnin">Jalan Isnin</textPath></MapLabel>
      <MapLabel $size={20} $halo="none"><textPath href="#way-express">and Expressway</textPath></MapLabel>
      <MapLabel $size={20} $halo="none"><textPath href="#way-road">ount Road</textPath></MapLabel>
      <MapLabel $size={20} $halo="none"><textPath href="#way-corridor">North-South Corridor</textPath></MapLabel>
    </MapSvg>
  );
}

/* ---------- emoji drawings ---------- */

function BugEmoji() {
  return (
    <Emoji viewBox="0 0 32 34" aria-hidden="true">
      <g fill="none" stroke="#b8591a" strokeWidth="1.6" strokeLinecap="round">
        <path d="M7 15l-2 4M11 18l-1 4M15 22l-2 4M19 26l-2 3M22 29l-1 3" />
        <path d="M5 4L2 2M8 3l3 -2" stroke="#555" />
      </g>
      <g stroke="#33420c" strokeWidth="1">
        <circle cx="26" cy="27" r="5" fill="#6f9417" />
        <circle cx="22" cy="22.500" r="5" fill="#9cc524" />
        <circle cx="18" cy="18" r="5" fill="#86b01c" />
        <circle cx="13" cy="12.500" r="5.500" fill="#a9d32c" />
      </g>
      <circle cx="7" cy="8.500" r="6" fill="#e8741a" />
      <path d="M8 3a6 6 0 0 1 5 7a9 9 0 0 0-5-7z" fill="#b6de3a" />
      <circle cx="5.500" cy="8" r="2" fill="#2b1608" />
      <circle cx="5" cy="7.400" r="0.800" fill="#fff" />
    </Emoji>
  );
}

function RefreshEmoji() {
  return (
    <Emoji viewBox="0 0 32 34" aria-hidden="true">
      <defs>
        <linearGradient id="refresh-bg" x1="0" y1="0" x2="0" y2="1">
          <stop offset="0" stopColor="#a9c4da" />
          <stop offset="1" stopColor="#5f87aa" />
        </linearGradient>
      </defs>
      <rect x="0.500" y="1.500" width="31" height="31" rx="6" fill="url(#refresh-bg)" stroke="#6e8fae" />
      <g fill="none" stroke="#fff" strokeWidth="3.400">
        <path d="M7 15.500A9.300 9.300 0 0 1 22.500 10.500" />
        <path d="M25 18.500A9.300 9.300 0 0 1 9.500 23.500" />
      </g>
      <path d="M18 14.500l9 2v-9.500zM14 19.500l-9-2v9.500z" fill="#fff" />
    </Emoji>
  );
}

function MagnifierEmoji() {
  return (
    <Emoji viewBox="0 0 32 34" aria-hidden="true">
      <path d="M19 20l3.500 3.500" stroke="#8b8f98" strokeWidth="3" />
      <path d="M22.500 23.500l6.500 7" stroke="#23262b" strokeWidth="5.500" strokeLinecap="round" />
      <circle cx="11.500" cy="12" r="10" fill="#f3f1e4" stroke="#6d7a8c" strokeWidth="2" />
      <circle cx="11.500" cy="12" r="8.400" fill="none" stroke="#c9d0d6" strokeWidth="1" />
    </Emoji>
  );
}

function CrossEmoji() {
  return (
    <Emoji viewBox="0 0 32 34" role="img" aria-label="no">
      <path d="M2.500 3l27 27.500M29.500 3l-27 27.500" stroke="#f20505" strokeWidth="6.500" />
    </Emoji>
  );
}

function CheckEmoji() {
  return (
    <Emoji viewBox="0 0 32 34" role="img" aria-label="yes">
      <rect x="0.500" y="0.500" width="31" height="32" rx="5" fill="#0cbd0c" stroke="#1b9a1b" />
      <path d="M6.500 17.500l2.500-2 4.500 6.500 9.500-16.500h3l-11.500 22h-2.500z" fill="#fff" />
    </Emoji>
  );
}

/* ---------- floating controls ---------- */

const ActivityPanel = styled.section`
  position: fixed;
  left: 32px;
  right: 32px;
  bottom: 32px;
  display: flex;
  flex-direction: column;
  align-items: center;
  gap: 32px;
  padding: 32px;
  border-radius: 16px;
  background: rgba(255, 255, 255, 0.95);
  backdrop-filter: blur(16px);
  box-shadow: 0 40px 50px -10px rgba(0, 0, 0, 0.1), 0 16px 20px -12px rgba(0, 0, 0, 0.1);
`;

const Segments = styled.div`
  display: flex;
  padding: 8px;
  border-radius: 16px;
  background: #f3f4f6;
`;

const Segment = styled.button`
  padding: 16px 32px;
  border-radius: 12px;
  font-size: 28px;
  line-height: 40px;
  color: ${(p) => (p.$active ? '#fff' : '#4a5565')};
  background: ${(p) => (p.$active ? '#2b7fff' : 'transparent')};
`;

const StartButton = styled.button`
  display: flex;
  align-items: center;
  justify-content: center;
  width: 128px;
  height: 128px;
  padding: 0 0 0 8px;
  border-radius: 50%;
  background: #00c950;
  color: #fff;
  box-shadow: 0 20px 30px -6px rgba(0, 0, 0, 0.1), 0 8px 12px -8px rgba(0, 0, 0, 0.1);
`;

const DevBadge = styled.button`
  position: fixed;
  left: 38px;
  bottom: 38px;
  width: 76px;
  height: 76px;
  padding: 0;
  border-radius: 50%;
  background: #333;
  box-shadow: inset 0 0 0 2px #171717, inset 0 0 0 4px #4d4d4d, 0 32px 64px -16px rgba(0, 0, 0, 0.24);
  svg { display: block; }
`;

function NextMark() {
  return (
    <svg width="76" height="76" viewBox="0 0 76 76" aria-hidden="true">
      <defs>
        <linearGradient id="n-diagonal" x1="9.956" y1="11.123" x2="15.478" y2="17.967" gradientUnits="userSpaceOnUse">
          <stop stopColor="#fff" />
          <stop offset="0.604" stopColor="#fff" stopOpacity="0" />
          <stop offset="1" stopColor="#fff" stopOpacity="0" />
        </linearGradient>
        <linearGradient id="n-stem" x1="11.822" y1="1.400" x2="11.791" y2="9.625" gradientUnits="userSpaceOnUse">
          <stop stopColor="#fff" />
          <stop offset="1" stopColor="#fff" stopOpacity="0" />
        </linearGradient>
      </defs>
      <g transform="translate(23 24) scale(2)" fill="none" strokeWidth="1.860">
        <path d="M13.300 15.200L2.340 1V12.600" stroke="url(#n-diagonal)" />
        <path d="M11.825 1.500V13.100" stroke="url(#n-stem)" />
      </g>
    </svg>
  );
}

const LINKS = ['Home', 'Targets', 'GPS Tracking', 'Routes'];
const ACTIVITIES = ['Running', 'Cycling', 'Walking'];
const CHECKS = [
  ['Should show permission screen:', false],
  ['Should show requesting screen:', false],
  ['Should show denied screen:', false],
  ['Should show loading screen:', false],
  ['Should show main GPS interface:', true],
];

export default function App() {
  return (
    <>
      <GlobalStyle />
      <Header>
        <Brand>PAL Fitness</Brand>
        <Nav>
          {LINKS.map((name) => (
            <NavLink key={name} href="#" $active={name === 'GPS Tracking'}>{name}</NavLink>
          ))}
        </Nav>
      </Header>
      <Main>
        <DebugPanel>
          <p><BugEmoji /> <b>DEBUG INFO:</b></p>
          <p>Permission: <Value $color="#ffdf20" $bold>granted</Value></p>
          <p>Loaded: <Value $color="#7bf1a8" $bold>true</Value></p>
          <p>Tracking: <Value $color="#8ec5ff" $bold>false</Value></p>
          <p>Current Position: <Value $color="#dab2ff">None</Value></p>
          <ResetButton type="button"><RefreshEmoji /> Reset to Permission Screen</ResetButton>
        </DebugPanel>

        <MapFrame>
          <CityMap />
          <ZoomControl>
            <ZoomButton type="button" aria-label="Zoom in">+</ZoomButton>
            <ZoomButton type="button" aria-label="Zoom out">−</ZoomButton>
          </ZoomControl>
          <Attribution>
            <a href="#">
              <Flag viewBox="0 0 12 8" aria-hidden="true">
                <path fill="#4C7BE1" d="M0 0h12v4H0z" />
                <path fill="#FFD500" d="M0 4h12v3H0z" />
                <path fill="#E0BC00" d="M0 7h12v1H0z" />
              </Flag>
              Leaflet
            </a>
            {' | © '}
            <a href="#">OpenStreetMap</a>
          </Attribution>
        </MapFrame>

        <StatePanel>
          <StateTitle><MagnifierEmoji /> Component State Analysis:</StateTitle>
          {CHECKS.map(([label, on]) => (
            <p key={label}><b>{label}</b> {on ? <CheckEmoji /> : <CrossEmoji />} {on ? 'YES' : 'NO'}</p>
          ))}
          <p><b>Actual permission state type:</b> string</p>
          <p><b>Permission state value:</b> "granted"</p>
        </StatePanel>
      </Main>

      <ActivityPanel>
        <Segments>
          {ACTIVITIES.map((name) => (
            <Segment key={name} type="button" aria-pressed={name === 'Running'} $active={name === 'Running'}>{name}</Segment>
          ))}
        </Segments>
        <StartButton type="button" aria-label="Start">
          <Play size={64} />
        </StartButton>
      </ActivityPanel>
      <DevBadge type="button" aria-label="Open developer tools"><NextMark /></DevBadge>
    </>
  );
}
